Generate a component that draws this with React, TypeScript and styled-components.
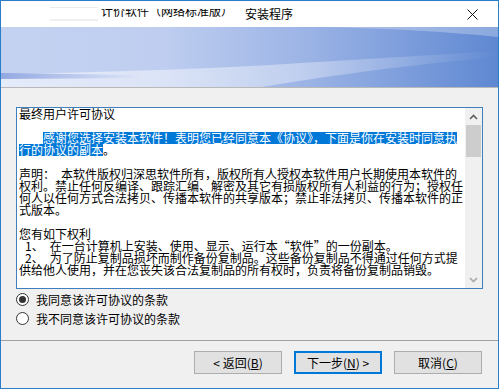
import React from 'react';
import styled, { createGlobalStyle } from 'styled-components';

const GlobalStyle = createGlobalStyle`
  html, body {
    margin: 0;
    padding: 0;
    background: #ffffff;
  }
  body {
    font-family: "Noto Sans CJK SC", "Liberation Sans", sans-serif;
    font-size: 12px;
    color: #000;
  }
`;

const Window = styled.div`
  width: 499px;
  height: 389px;
  box-sizing: border-box;
  border: 1px solid #2a7dc8;
  background: #f0f0f0;
  display: flex;
  flex-direction: column;
  overflow: hidden;
`;

const TitleBar = styled.div`
  height: 26px;
  flex-shrink: 0;
  background: #ffffff;
  display: flex;
  align-items: center;
  padding-left: 49px;
`;

// painted-over program icon / name in the original caption
const Smudge = styled.span`
  width: 48px;
  height: 14px;
  box-sizing: border-box;
  border-top: 1px solid #ececec;
  border-bottom: 2px solid #efefef;
  margin-right: 3px;
`;

const ClippedName = styled.span`
  font-size: 12px;
  line-height: 14px;
  white-space: nowrap;
  transform: translateY(-3px);
  clip-path: inset(5px 0 0 0);
`;

const TitleText = styled.span`
  font-size: 12px;
  line-height: 14px;
  margin-left: 12px;
  white-space: nowrap;
`;

const CloseBox = styled.span`
  margin-left: auto;
  margin-right: 20px;
  display: flex;
`;

const Banner = styled.div`
  height: 60px;
  flex-shrink: 0;
  border-bottom: 1px solid #b8b8b8;
  svg {
    display: block;
  }
`;

const Content = styled.div`
  height: 252px;
  box-sizing: border-box;
  padding: 19px 15px 0;
  flex-shrink: 0;
`;

const LicenseBox = styled.div`
  height: 182px;
  box-sizing: border-box;
  border: 1px solid #3f7fbf;
  background: #ffffff;
  display: flex;
`;

const LicenseText = styled.div`
  flex: 1;
  padding-left: 2px;
  overflow: hidden;
`;

const Line = styled.div`
  height: 12px;
  line-height: 12px;
  font-size: 12px;
  white-space: nowrap;
`;

const Selected = styled.span`
  display: inline-block;
  vertical-align: top;
  height: 12px;
  line-height: 12px;
  background: #0078d7;
  color: #ffffff;
`;

const ScrollBar = styled.div`
  width: 17px;
  background: #f0f0f0;
  display: flex;
  flex-direction: column;
`;

const ScrollArrow = styled.div`
  height: 17px;
  display: flex;
  align-items: center;
  justify-content: center;
`;

const Thumb = styled.div`
  height: 32px;
  margin: 0 1px;
  background: #cdcdcd;
`;

const Track = styled.div`
  flex: 1;
`;

const RadioList = styled.div`
  margin-top: 1px;
  display: flex;
  flex-direction: column;
`;

const RadioRow = styled.label`
  height: 19px;
  display: flex;
  align-items: center;
  gap: 7px;
  font-size: 12px;
`;

const RadioDot = styled.span<{ $checked?: boolean }>`
  width: 13px;
  height: 13px;
  box-sizing: border-box;
  border-radius: 50%;
  border: 1px solid #333333;
  background: #ffffff;
  display: flex;
  align-items: center;
  justify-content: center;
  &::after {
    content: '';
    width: 7px;
    height: 7px;
    border-radius: 50%;
    background: ${({ $checked }) => ($checked ? '#333333' : 'transparent')};
  }
`;

const Separator = styled.div`
  height: 1px;
  flex-shrink: 0;
  background: #a0a0a0;
`;

const Footer = styled.div`
  display: flex;
  justify-content: flex-end;
  gap: 12px;
  padding: 10px 16px 0 0;
`;

const Button = styled.button<{ $default?: boolean }>`
  width: 88px;
  height: 23px;
  box-sizing: border-box;
  margin: 0;
  padding: 0;
  background: #e1e1e1;
  border: ${({ $default }) => ($default ? '2px solid #0078d7' : '1px solid #adadad')};
  font-family: "Noto Sans CJK SC", "Liberation Sans", sans-serif;
  font-size: 12px;
  color: #000;
  line-height: 14px;
`;

const Key = styled.span`
  text-decoration: underline;
`;

const BannerArt = () => (
  <svg width="497" height="60" viewBox="0 0 497 60">
    <defs>
      <linearGradient id="bg" x1="0" y1="0" x2="1" y2="0">
        <stop offset="0" stopColor="#c4d2f1" />
        <stop offset="0.32" stopColor="#bfcef0" />
        <stop offset="0.62" stopColor="#9bb3e5" />
        <stop offset="1" stopColor="#5f88d2" />
      </linearGradient>
      <linearGradient id="glow" x1="0" y1="0" x2="1" y2="0">
        <stop offset="0" stopColor="#ffffff" stopOpacity="0.55" />
        <stop offset="0.6" stopColor="#ffffff" stopOpacity="0.35" />
        <stop offset="1" stopColor="#ffffff" stopOpacity="0" />
      </linearGradient>
      <linearGradient id="dark" x1="0" y1="0" x2="1" y2="0">
        <stop offset="0" stopColor="#7f98dc" stopOpacity="0.8" />
        <stop offset="1" stopColor="#7f98dc" stopOpacity="0" />
      </linearGradient>
    </defs>
    <rect width="497" height="60" fill="url(#bg)" />
    <path d="M320 0 Q420 2 497 10 L497 0 Z" fill="#ffffff" opacity="0.28" />
    <path d="M0 47 Q180 44 300 36 Q400 30 497 24 L497 30 Q380 40 260 60 L0 60 Z" fill="url(#glow)" />
    <path d="M0 46 L140 48 L140 51 L0 52 Z" fill="url(#dark)" />
  </svg>
);

const CloseIcon = () => (
  <svg width="11" height="11" viewBox="0 0 11 11">
    <path d="M0.5 0.5 L10.5 10.5 M10.5 0.5 L0.5 10.5" stroke="#111" strokeWidth="1" />
  </svg>
);

const Chevron = ({ up, color }: { up?: boolean; color: string }) => (
  <svg width="9" height="6" viewBox="0 0 9 6">
    <polyline
      points={up ? '1,5 4.5,1.5 8,5' : '1,1 4.5,4.5 8,1'}
      fill="none"
      stroke={color}
      strokeWidth="1.6"
    />
  </svg>
);

const App = () => {
  return (
    <Window>
      <GlobalStyle />
      <TitleBar>
        <Smudge />
        <ClippedName>计价软件（网络标准版）</ClippedName>
        <TitleText>安装程序</TitleText>
        <CloseBox>
          <CloseIcon />
        </CloseBox>
      </TitleBar>
      <Banner>
        <BannerArt />
      </Banner>
      <Content>
        <LicenseBox>
          <LicenseText>
            <Line>最终用户许可协议</Line>
            <Line />
            <Line>
              {'\u3000\u3000'}
              <Selected>感谢您选择安装本软件！表明您已经同意本《协议》，下面是你在安装时同意执</Selected>
            </Line>
            <Line>
              <Selected>行的协议的副本</Selected>。
            </Line>
            <Line />
            <Line>声明：{'\u2002'}本软件版权归深思软件所有，版权所有人授权本软件用户长期使用本软件的</Line>
            <Line>权利。禁止任何反编译、跟踪汇编、解密及其它有损版权所有人利益的行为；授权任</Line>
            <Line>何人以任何方式合法拷贝、传播本软件的共享版本；禁止非法拷贝、传播本软件的正</Line>
            <Line>式版本。</Line>
            <Line />
            <Line>您有如下权利</Line>
            <Line>{'\u2002'}1、{'\u2002'}在一台计算机上安装、使用、显示、运行本“软件”的一份副本。</Line>
            <Line>{'\u2002'}2、{'\u2002'}为了防止复制品损坏而制作备份复制品。这些备份复制品不得通过任何方式提</Line>
            <Line>供给他人使用，并在您丧失该合法复制品的所有权时，负责将备份复制品销毁。</Line>
          </LicenseText>
          <ScrollBar>
            <ScrollArrow>
              <Chevron up color="#606060" />
            </ScrollArrow>
            <Thumb />
            <Track />
            <ScrollArrow>
              <Chevron color="#a8a8a8" />
            </ScrollArrow>
          </ScrollBar>
        </LicenseBox>
        <RadioList>
          <RadioRow>
            <RadioDot $checked />
            我同意该许可协议的条款
          </RadioRow>
          <RadioRow>
            <RadioDot />
            我不同意该许可协议的条款
          </RadioRow>
        </RadioList>
      </Content>
      <Separator />
      <Footer>
        <Button>
          {'< '}返回(<Key>B</Key>)
        </Button>
        <Button $default>
          下一步(<Key>N</Key>){' >'}
        </Button>
        <Button>
          取消(<Key>C</Key>)
        </Button>
      </Footer>
    </Window>
  );
};

export default App;
